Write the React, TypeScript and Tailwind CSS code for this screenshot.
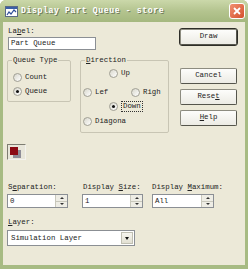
import React from 'react';

const font = { fontFamily: '"Liberation Mono", "DejaVu Sans Mono", monospace' };

function Radio({ checked }: { checked?: boolean }) {
  return (
    <span className="w-[9px] h-[9px] rounded-full border border-[#a09f94] bg-gradient-to-br from-[#d8d7cc] to-white flex items-center justify-center shrink-0">
      {checked && <span className="w-[3px] h-[3px] rounded-full bg-[#111]" />}
    </span>
  );
}

function RadioItem({ label, checked, focus }: { label: string; checked?: boolean; focus?: boolean }) {
  return (
    <div className="flex items-center h-[10px]">
      <Radio checked={checked} />
      <span className={`ml-[3px] leading-[9px] ${focus ? 'border border-dotted border-[#333] px-[1px]' : ''}`}>{label}</span>
    </div>
  );
}

function Button({ children, isDefault }: { children: React.ReactNode; isDefault?: boolean }) {
  return (
    <div
      className={`w-[57px] h-[16px] flex items-center justify-center rounded-[2px] bg-gradient-to-b from-[#fdfdfb] to-[#ecebe4] border border-[#8d8c80] border-b-[#55554c] border-r-[#55554c] ${
        isDefault ? 'outline outline-1 outline-[#2e2e28]' : ''
      }`}
    >
      {children}
    </div>
  );
}

function Spin({ value, width }: { value: string; width: string }) {
  return (
    <div className={`${width} h-[14px] flex border border-[#8b8f94] bg-white`}>
      <div className="flex-1 pl-[2px] leading-[12px]">{value}</div>
      <div className="w-[12px] flex flex-col">
        <div className="flex-1 bg-[#eeede5] border-l border-[#c9c8bc] flex items-center justify-center">
          <span className="w-0 h-0 border-x-[2px] border-x-transparent border-b-[2px] border-b-[#333]" />
        </div>
        <div className="flex-1 bg-[#eeede5] border-l border-t border-[#c9c8bc] flex items-center justify-center">
          <span className="w-0 h-0 border-x-[2px] border-x-transparent border-t-[2px] border-t-[#333]" />
        </div>
      </div>
    </div>
  );
}

export default function App() {
  return (
    <div className="w-[248px] h-[269px] bg-[#a7bb83] flex flex-col rounded-t-[6px] overflow-hidden text-[7.4px] text-[#222]" style={font}>
      {/* title bar */}
      <div className="h-[22px] flex items-center bg-gradient-to-b from-[#cbd8aa] via-[#b4c48f] to-[#a5b87f] pl-[5px] pr-[3px]">
        <svg width="13" height="11" viewBox="0 0 13 11">
          <rect x="0.5" y="0.5" width="12" height="10" fill="#fff" stroke="#5a6a86" />
          <rect x="1" y="1" width="11" height="2" fill="#3a5fa8" />
          <path d="M2 9 L4 6 L6 8 L9 4 L11 6" stroke="#2f4f9a" strokeWidth="1.2" fill="none" />
        </svg>
        <span className="ml-[3px] text-[8.2px] leading-[10px] font-bold text-white tracking-[0.6px] [text-shadow:1px_1px_0_#6f7a5c]">
          Display Part Queue - store
        </span>
        <div className="ml-auto w-[16px] h-[16px] rounded-[3px] border border-white bg-gradient-to-br from-[#f09070] to-[#d4502a] flex items-center justify-center">
          <svg width="8" height="8" viewBox="0 0 8 8">
            <path d="M1 1 L7 7 M7 1 L1 7" stroke="#fff" strokeWidth="1.8" />
          </svg>
        </div>
      </div>

      {/* body */}
      <div className="flex-1 mx-[3px] mb-[4px] bg-[#ece9d8] px-[4px] flex flex-col">
        <div className="flex">
          <div className="w-[163px] flex flex-col">
            <div className="pt-[4px] ml-[1px] leading-[10px]">
              La<span className="underline">b</span>el:
            </div>
            <div className="mt-[1px] ml-[1px] w-[88px] h-[13px] border border-[#8b8f94] bg-white pl-[2px] leading-[11px]">
              Part Queue
            </div>
            <div className="flex mt-[6px]">
              <fieldset className="w-[64px] h-[46px] border border-[#c8c5b4] rounded-[2px] flex flex-col">
                <legend className="ml-[4px] px-[1px] leading-[9px]">Queue Type</legend>
                <div className="ml-[5px] mt-[7px]">
                  <RadioItem label="Count" />
                </div>
                <div className="ml-[5px] mt-[4px]">
                  <RadioItem label="Queue" checked />
                </div>
              </fieldset>
              <fieldset className="ml-[9px] w-[89px] h-[77px] border border-[#c8c5b4] rounded-[2px] flex flex-col">
                <legend className="ml-[4px] px-[1px] leading-[9px]">
                  <span className="underline">D</span>irection
                </legend>
                <div className="ml-[28px] mt-[3px]">
                  <RadioItem label="Up" />
                </div>
                <div className="ml-[2px] mt-[9px] flex">
                  <div className="w-[48px]">
                    <RadioItem label="Lef" />
                  </div>
                  <RadioItem label="Righ" />
                </div>
                <div className="ml-[28px] mt-[4px]">
                  <RadioItem label="Down" checked focus />
                </div>
                <div className="ml-[2px] mt-[5px]">
                  <RadioItem label="Diagona" />
                </div>
              </fieldset>
            </div>
          </div>
          <div className="ml-[10px] flex flex-col">
            <div className="mt-[7px]">
              <Button isDefault>Draw</Button>
            </div>
            <div className="mt-[23px]">
              <Button>Cancel</Button>
            </div>
            <div className="mt-[5px]">
              <Button>
                Rese<span className="underline">t</span>
              </Button>
            </div>
            <div className="mt-[5px]">
              <Button>
                <span className="underline">H</span>elp
              </Button>
            </div>
          </div>
        </div>

        {/* colour swatch */}
        <div className="mt-[11px] w-[19px] h-[16px] border border-[#7e7d72] border-b-[#f4f3ee] border-r-[#f4f3ee] bg-[#e8e6da] pl-[2px] pt-[2px]">
          <div className="w-[8px] h-[8px] bg-[#8b0a14] shadow-[3px_3px_0_#8e8d98]" />
        </div>

        {/* spin row */}
        <div className="mt-[22px] flex">
          <div className="w-[75px] flex flex-col">
            <div className="leading-[10px] ml-[1px]">
              S<span className="underline">e</span>paration:
            </div>
            <div className="mt-[2px]">
              <Spin value="0" width="w-[61px]" />
            </div>
          </div>
          <div className="w-[70px] flex flex-col">
            <div className="leading-[10px] ml-[1px]">
              Display <span className="underline">S</span>ize:
            </div>
            <div className="mt-[2px]">
              <Spin value="1" width="w-[61px]" />
            </div>
          </div>
          <div className="flex flex-col">
            <div className="leading-[10px]">
              Display <span className="underline">M</span>aximum:
            </div>
            <div className="mt-[2px]">
              <Spin value="All" width="w-[62px]" />
            </div>
          </div>
        </div>

        {/* layer */}
        <div className="mt-[9px] leading-[10px] ml-[1px]">
          <span className="underline">L</span>ayer:
        </div>
        <div className="mt-[3px] w-[128px] h-[16px] flex border border-[#8b8f94] bg-white">
          <div className="flex-1 pl-[3px] leading-[14px]">Simulation Layer</div>
          <div className="w-[12px] my-[1px] mr-[1px] bg-gradient-to-b from-[#f6f5ef] to-[#e2e0d2] border border-[#c0bfb2] flex items-center justify-center">
            <span className="w-0 h-0 border-x-[2.5px] border-x-transparent border-t-[3px] border-t-[#111]" />
          </div>
        </div>
      </div>
    </div>
  );
}
